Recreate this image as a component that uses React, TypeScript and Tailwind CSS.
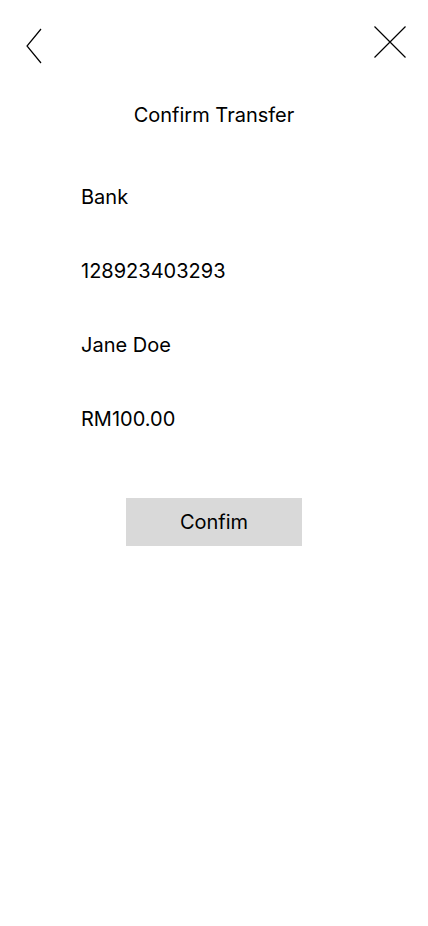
const rows = ["Bank", "128923403293", "Jane Doe", "RM100.00"];

export default function App() {
  return (
    <div className="w-[428px] h-[926px] bg-white text-black font-['Inter',sans-serif]">
      <header className="flex justify-between items-start pt-[26px] pl-[26px] pr-[22px]">
        <button className="mt-[2px]">
          <svg width="16" height="36" viewBox="0 0 16 36" fill="none" stroke="#000" strokeWidth="1.2">
            <path d="M15 1 L1 18 L15 35" />
          </svg>
        </button>
        <button>
          <svg width="32" height="32" viewBox="0 0 32 32" fill="none" stroke="#000" strokeWidth="1.2">
            <path d="M0.5 0.5 L31.5 31.5 M31.5 0.5 L0.5 31.5" />
          </svg>
        </button>
      </header>
      <h1 className="mt-[39px] text-center text-[20px] leading-[24px]">Confirm Transfer</h1>
      <div className="mt-[58px] pl-[81px] flex flex-col gap-[50px]">
        {rows.map((r) => (
          <p key={r} className="text-[20px] leading-[24px]">{r}</p>
        ))}
      </div>
      <div className="mt-[67px] flex justify-center">
        <button className="w-[176px] h-[48px] bg-[#d9d9d9] text-[20px] leading-[24px]">Confim</button>
      </div>
    </div>
  );
}
